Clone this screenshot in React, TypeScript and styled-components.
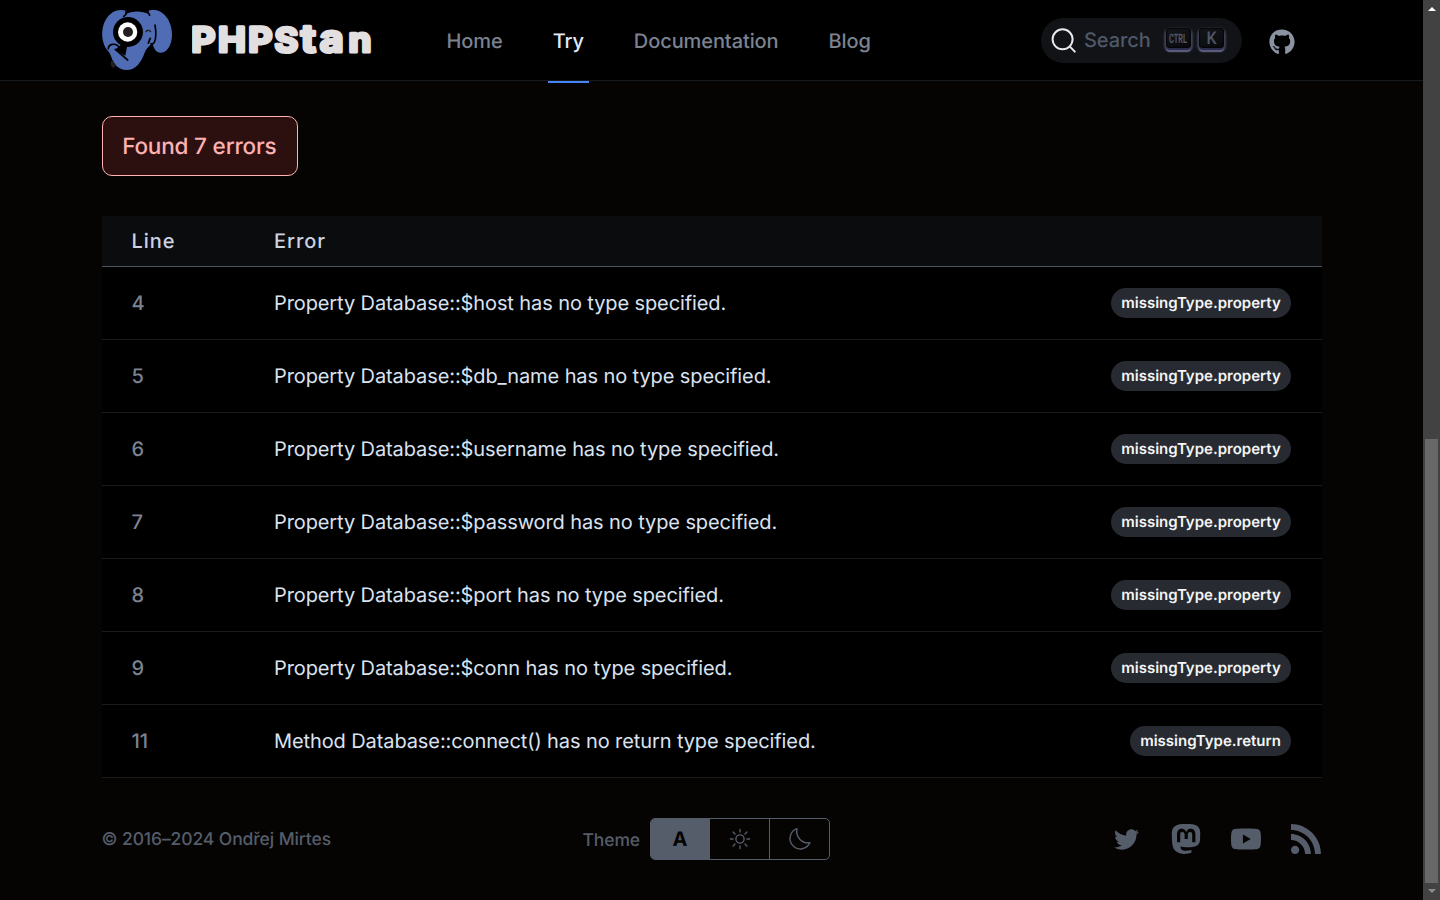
import React from "react";
import styled, { createGlobalStyle } from "styled-components";
import { FaTwitter, FaGithub } from "react-icons/fa";
import { SiMastodon, SiYoutube, SiRss } from "react-icons/si";

const GlobalStyle = createGlobalStyle`
  * { box-sizing: border-box; }
  html, body { margin: 0; padding: 0; background: #050403; }
  body { font-family: Inter, "Liberation Sans", sans-serif; font-size: 20px; line-height: 30px; overflow: hidden; text-rendering: geometricPrecision; }
  button { text-rendering: inherit; }
`;

const Window = styled.div`
  display: flex;
  width: 1440px;
  height: 900px;
`;

const Page = styled.div`
  display: flex;
  flex-direction: column;
  width: 1423px;
  height: 900px;
  background: #050403;
`;

const Header = styled.header`
  height: 81px;
  background: #000;
  border-bottom: 1px solid #161b20;
  display: flex;
  align-items: flex-start;
  padding: 0 128px 0 102px;
`;

const Logo = styled.a`
  display: flex;
  padding-top: 10px;
  width: 319px;
  gap: 20px;
`;

const Nav = styled.nav`
  display: flex;
  gap: 40px;
  padding-left: 20.5px;
`;

const NavLink = styled.a<{ $active?: boolean }>`
  display: block;
  height: 83px;
  padding: 26px 5px 0;
  font-weight: 500;
  letter-spacing: -0.09px;
  white-space: nowrap;
  color: ${(p) => (p.$active ? "#e2e8f8" : "#7b8391")};
  border-bottom: 2px solid ${(p) => (p.$active ? "#4585f5" : "transparent")};
`;

const Tools = styled.div`
  display: flex;
  align-items: center;
  margin-left: auto;
  padding-top: 18px;
  gap: 27px;
  color: #8b93a3;
`;

const GithubLink = styled.a`
  display: flex;
  padding-top: 2px;
`;

const SearchButton = styled.button`
  display: flex;
  align-items: center;
  width: 201px;
  height: 45px;
  padding: 0 18px 0 10px;
  border: 0;
  border-radius: 23px;
  background: #111317;
  font: 500 20px/30px Inter, sans-serif;
  color: #4f5869;
`;

const SearchLabel = styled.span`
  padding: 0 0 2px 8px;
  margin-right: auto;
  letter-spacing: -0.08px;
`;

const Key = styled.kbd`
  display: flex;
  align-items: center;
  justify-content: center;
  width: 25px;
  height: 20px;
  margin: 0 0 6px 8px;
  border-radius: 4px;
  background: linear-gradient(-27deg, #08090b, #15171b);
  box-shadow: inset 0 0 1px 1px #050608, 0 2px 0 0 #2b2b4b, 0 4px 1px 0 #5d5e7e, 0 2px 2px 2px #3c3d50;
`;

const Main = styled.main`
  padding: 35px 101px 0 102px;
`;

const Alert = styled.div`
  display: inline-flex;
  align-items: center;
  width: 196px;
  height: 60px;
  padding: 1px 0 0 19.2px;
  border: 1px solid #fdb1b1;
  border-radius: 10px;
  background: #2c1010;
  color: #fdb1b1;
  font-size: 22.5px;
  font-weight: 500;
  letter-spacing: -0.18px;
  white-space: nowrap;
`;

const Table = styled.div`
  margin-top: 40px;
  background: #000;
`;

const HeadRow = styled.div`
  display: flex;
  align-items: center;
  height: 51px;
  padding: 0 29.5px;
  background: #0a0c0e;
  border-bottom: 1px solid #4e5661;
  color: #ccd3e2;
  font-weight: 500;
  letter-spacing: 0.95px;
`;

const Row = styled.div`
  display: flex;
  align-items: center;
  height: 73px;
  padding: 0 31px 0 29.5px;
  border-bottom: 1px solid #1a1b1d;
`;

const LineCell = styled.div`
  width: 142.5px;
`;

const LineNumber = styled(LineCell)`
  color: #7b8391;
  font-weight: 500;
`;

const Message = styled.div`
  flex: 1;
  color: #dbe2f0;
  letter-spacing: -0.1px;
`;

const Badge = styled.span<{ $wide?: boolean }>`
  display: flex;
  justify-content: center;
  width: ${(p) => (p.$wide ? "180px" : "161px")};
  height: 30px;
  border-radius: 15px;
  background: #272a31;
  color: #f5f5f5;
  font-size: 15px;
  font-weight: 600;
`;

const Footer = styled.footer`
  display: grid;
  grid-template-columns: 480.5px 1fr auto;
  align-items: center;
  height: 42px;
  margin: 40px 102px 0 101.5px;
  color: #565d6a;
  font-size: 17.5px;
  font-weight: 500;
  letter-spacing: -0.1px;
`;

const Copyright = styled.span`
  padding-top: 2px;
`;

const ThemePicker = styled.div`
  display: flex;
  align-items: center;
  gap: 10px;
`;

const ThemeLabel = styled.span`
  width: 58px;
  padding: 4px 0 0 0.5px;
`;

const Segments = styled.div`
  display: flex;
  width: 180px;
  height: 42px;
  border: 1px solid #565d6a;
  border-radius: 5px;
  overflow: hidden;
`;

const Segment = styled.button<{ $on?: boolean }>`
  display: flex;
  align-items: center;
  justify-content: center;
  width: ${(p) => (p.$on ? "58px" : "60px")};
  padding: 0;
  border: 0;
  border-left: ${(p) => (p.$on ? "0" : "1px solid #565d6a")};
  background: ${(p) => (p.$on ? "#565d6a" : "transparent")};
  color: ${(p) => (p.$on ? "#050403" : "#565d6a")};
  font: 700 20px/30px Inter, sans-serif;
`;

const Social = styled.div`
  display: flex;
  align-items: center;
  gap: 30px;
`;

const SocialLink = styled.a`
  display: flex;
  align-items: center;
  justify-content: center;
  width: 30px;
  height: 30px;
`;

const ScrollTrack = styled.div`
  display: flex;
  flex-direction: column;
  align-items: center;
  width: 17px;
  height: 900px;
  background: #424242;
`;

const ScrollArrow = styled.div<{ $down?: boolean }>`
  display: flex;
  width: 17px;
  height: 17px;
  justify-content: center;
  padding-top: ${(p) => (p.$down ? "6px" : "7px")};
`;

const ScrollThumb = styled.div`
  width: 13px;
  height: 444px;
  margin-top: 422px;
  background: #686868;
`;

const KeyText = styled.svg`
  overflow: visible;
  fill: currentColor;
  font-family: Roboto, sans-serif;
`;

const Elephant = () => (
  <svg width="70" height="60" viewBox="36 30 210 180">
    <path fill="#4f6cb5" d="M110 33C88 25 62 34 48 58C35 80 32 112 44 138C49 151 60 155 64 171C70 192 87 210 109 210C139 210 153 186 164 158C170 143 178 139 187 129C192 149 200 159 213 158C235 156 246 130 246 104C246 68 226 34 195 30C187 29 179 30 173 34L177 43C155 32 127 32 107 43Z" />
    <path fill="none" stroke="#000" strokeWidth="5" strokeLinecap="round" strokeLinejoin="round" d="M108 35L108 43L101 49M173 34L179 46M195 75C198 93 198 116 193 127C190 132 186 132 183 131M181 115C177 119 179 123 175 129" />
    <path fill="none" stroke="#222" strokeWidth="4" strokeLinecap="round" d="M168 95C171 89 180 90 182 95" />
    <circle cx="114" cy="96" r="45" fill="#000" />
    <circle cx="113" cy="96" r="29" fill="#fff" />
    <circle cx="114" cy="96" r="15" fill="#231f20" />
    <path fill="#000" d="M93 134L112 136L106 167L75 149Z" />
    <path fill="none" stroke="#000" strokeWidth="5" strokeLinecap="round" d="M55 146C55 131 77 129 85 139M76 148L113 180" />
    <path fill="#231f20" d="M63 184L69 180Q73 192 78 196Q76 203 68 203Q59 195 63 184Z" />
  </svg>
);

const Wordmark = () => (
  <svg width="184" height="60" viewBox="0 0 184 60">
    <text
      transform="scale(1.08 1)"
      x="-0.8 24 52.2 76.4 100.8 118.4 145"
      y="42.2"
      fontFamily="Inter, sans-serif"
      fontWeight="700"
      fontSize="34.5"
      fill="#e2dfe0"
      stroke="#e2dfe0"
      strokeWidth="3.2"
      strokeLinejoin="round"
    >
      PHP<tspan fontSize="33.5">S</tspan><tspan fontSize="38">ta</tspan><tspan fontSize="34">n</tspan>
    </text>
  </svg>
);

const SearchIcon = () => (
  <svg width="25" height="25" viewBox="0 0 25 25" fill="none" stroke="#e8e9ee" strokeWidth="2" strokeLinecap="round">
    <circle cx="11.6" cy="11.3" r="10" />
    <path d="M18.9 18.6L23.8 23.6" />
  </svg>
);

const SunIcon = () => (
  <svg width="22" height="22" viewBox="0 0 22 22" fill="none" stroke="currentColor" strokeWidth="1.4" strokeLinecap="round">
    <circle cx="11" cy="11" r="4.1" />
    <path d="M11 1.4V4M11 18V20.6M1.4 11H4M18 11H20.6M4.1 4.1L6 6M16 16L17.9 17.9M4.1 17.9L6 16M16 6L17.9 4.1" />
  </svg>
);

const MoonIcon = () => (
  <svg width="24" height="24" viewBox="0 0 24 24" fill="none" stroke="currentColor" strokeWidth="1.4" strokeLinejoin="round">
    <path d="M9 1.7A10.4 10.4 0 1 0 22 15.6A11.4 11.4 0 0 1 9 1.7Z" />
  </svg>
);

const property = (name: string) => `Property Database::$${name} has no type specified.`;

const errors = [
  { line: 4, message: property("host"), id: "missingType.property" },
  { line: 5, message: property("db_name"), id: "missingType.property" },
  { line: 6, message: property("username"), id: "missingType.property" },
  { line: 7, message: property("password"), id: "missingType.property" },
  { line: 8, message: property("port"), id: "missingType.property" },
  { line: 9, message: property("conn"), id: "missingType.property" },
  { line: 11, message: "Method Database::connect() has no return type specified.", id: "missingType.return" },
];

export default function App() {
  return (
    <Window>
      <GlobalStyle />
      <Page>
        <Header>
          <Logo>
            <Elephant />
            <Wordmark />
          </Logo>
          <Nav>
            <NavLink>Home</NavLink>
            <NavLink $active>Try</NavLink>
            <NavLink>Documentation</NavLink>
            <NavLink>Blog</NavLink>
          </Nav>
          <Tools>
            <SearchButton>
              <SearchIcon />
              <SearchLabel>Search</SearchLabel>
              <Key>
                <KeyText width="21" height="20" viewBox="0 0 21 20">
                  <text x="1" y="14.5" textLength="18" lengthAdjust="spacingAndGlyphs" fontWeight="700" fontSize="13">CTRL</text>
                </KeyText>
              </Key>
              <Key>
                <KeyText width="16" height="20" viewBox="0 0 16 20">
                  <text x="2.5" y="16" textLength="10" lengthAdjust="spacingAndGlyphs" fontWeight="500" fontSize="17.5">K</text>
                </KeyText>
              </Key>
            </SearchButton>
            <GithubLink>
              <FaGithub size={26} />
            </GithubLink>
          </Tools>
        </Header>
        <Main>
          <Alert>Found 7 errors</Alert>
          <Table>
            <HeadRow>
              <LineCell>Line</LineCell>
              <div>Error</div>
            </HeadRow>
            {errors.map((e) => (
              <Row key={e.line}>
                <LineNumber>{e.line}</LineNumber>
                <Message>{e.message}</Message>
                <Badge $wide={e.id.endsWith("property")}>{e.id}</Badge>
              </Row>
            ))}
          </Table>
        </Main>
        <Footer>
          <Copyright>© 2016–2024 Ondřej Mirtes</Copyright>
          <ThemePicker>
            <ThemeLabel>Theme</ThemeLabel>
            <Segments>
              <Segment $on>A</Segment>
              <Segment><SunIcon /></Segment>
              <Segment><MoonIcon /></Segment>
            </Segments>
          </ThemePicker>
          <Social>
            <SocialLink><FaTwitter size={25} /></SocialLink>
            <SocialLink><SiMastodon size={30} /></SocialLink>
            <SocialLink><SiYoutube size={30} /></SocialLink>
            <SocialLink><SiRss size={30} /></SocialLink>
          </Social>
        </Footer>
      </Page>
      <ScrollTrack>
        <ScrollArrow>
          <svg width="8" height="4"><path d="M4 0L8 4H0Z" fill="#fff" /></svg>
        </ScrollArrow>
        <ScrollThumb />
        <ScrollArrow $down>
          <svg width="8" height="4"><path d="M0 0H8L4 4Z" fill="#8b8b8b" /></svg>
        </ScrollArrow>
      </ScrollTrack>
    </Window>
  );
}
